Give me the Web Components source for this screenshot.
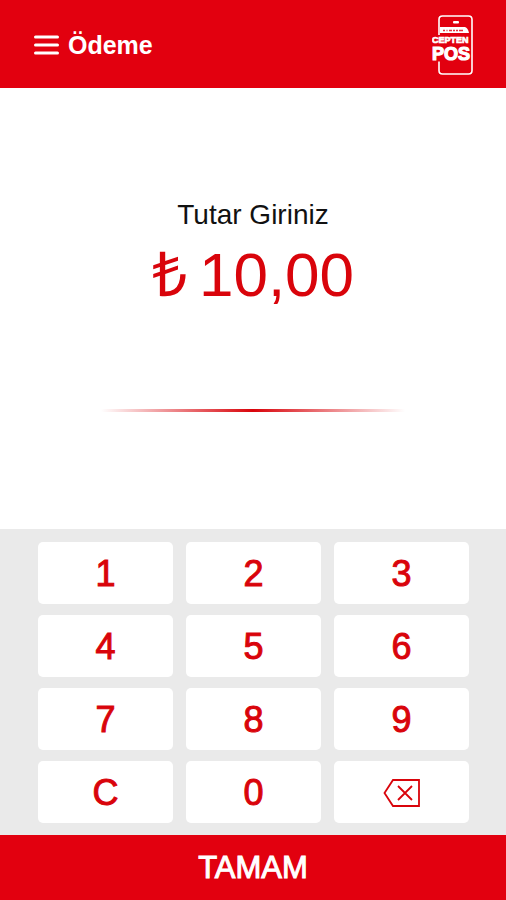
<!DOCTYPE html>
<html lang="tr">
<head>
<meta charset="utf-8">
<meta name="viewport" content="width=device-width, initial-scale=1">
<title>Ödeme</title>
<style>
  body {
    margin: 0;
    font-family: "Liberation Sans", Arial, sans-serif;
    --red: #e2000f;
    --ink: #d9040b;
  }
</style>
</head>
<body>
<pos-app>
  <pos-header slot="header" title="Ödeme"></pos-header>
  <pos-amount label="Tutar Giriniz" currency="₺">10,00</pos-amount>
  <pos-keypad slot="keypad"></pos-keypad>
  <pos-confirm slot="footer">TAMAM</pos-confirm>
</pos-app>

<script>
class PosApp extends HTMLElement {
  constructor() {
    super();
    this.root = this.attachShadow({ mode: "open" });
    this.root.innerHTML = `
      <style>
        :host {
          display: flex;
          flex-direction: column;
          min-height: 100vh;
          background: white;
        }
        main {
          flex: 1;
          display: flex;
          flex-direction: column;
        }
      </style>
      <slot name="header"></slot>
      <main><slot></slot></main>
      <slot name="keypad"></slot>
      <slot name="footer"></slot>
    `;
  }
}
customElements.define("pos-app", PosApp);

class PosLogo extends HTMLElement {
  constructor() {
    super();
    this.root = this.attachShadow({ mode: "open" });
    this.root.innerHTML = `
      <style>
        :host { display: block; }
        svg { display: block; }
        text {
          font-family: "Liberation Sans", Arial, sans-serif;
          font-weight: 700;
          fill: white;
          stroke: white;
        }
      </style>
      <svg width="42" height="62" viewBox="0 0 42 62" role="img" aria-label="Cepten POS">
        <path d="M7 21V5.500q0-3.500 3.500-3.500h26q3.500 0 3.500 3.500v51q0 3.500-3.500 3.500h-26q-3.500 0-3.500-3.500v-9" fill="none" stroke="white" stroke-width="1.600"/>
        <rect x="21" y="7" width="6" height="2.500" rx="1" fill="white"/>
        <path d="M8 13h25q3 1 4 6H8z" fill="white"/>
        <path d="M11 16.500h2M14.500 16.500h1M17 16.500h3M21 16.500h2M24 16.500h2M27 16.500h4" stroke="#e2000f" stroke-width="1.500" opacity=".8"/>
        <text x="0" y="29" font-size="9" stroke-width=".7">CEPTEN</text>
        <text x="0" y="46" font-size="18" stroke-width="1.200">POS</text>
      </svg>
    `;
  }
}
customElements.define("pos-logo", PosLogo);

class PosHeader extends HTMLElement {
  constructor() {
    super();
    this.root = this.attachShadow({ mode: "open" });
    this.root.innerHTML = this.html();
    this.root.querySelector("h1").innerText = this.getAttribute("title") || "";
  }

  html() {
    return `
      <style>
        :host {
          display: block;
          background: var(--red);
          color: white;
        }
        header {
          display: flex;
          align-items: center;
          gap: 9px;
          box-sizing: border-box;
          height: 88px;
          padding: 2px 32px 0 34px;
        }
        button {
          padding: 0;
          border: 0;
          background: none;
          color: inherit;
          cursor: pointer;
        }
        svg { display: block; }
        h1 {
          flex: 1;
          margin: 0;
          font-size: 25px;
          line-height: 32px;
        }
      </style>
      <header>
        <button type="button" aria-label="Menü">
          <svg width="25" height="20" viewBox="0 0 25 20" fill="none" stroke="currentColor" stroke-width="3" stroke-linecap="round">
            <path d="M1.500 2h22M1.500 10h22M1.500 18h22"/>
          </svg>
        </button>
        <h1></h1>
        <pos-logo></pos-logo>
      </header>
    `;
  }
}
customElements.define("pos-header", PosHeader);

class PosAmount extends HTMLElement {
  constructor() {
    super();
    this.root = this.attachShadow({ mode: "open" });
    this.root.innerHTML = this.html();
    this.root.querySelector(".label").innerText = this.getAttribute("label") || "";
    this.root.querySelector(".currency").innerText = this.getAttribute("currency") || "₺";
  }

  html() {
    return `
      <style>
        :host {
          flex: 1;
          display: flex;
          flex-direction: column;
          align-items: center;
          padding: 111px 16px;
          text-align: center;
        }
        p { margin: 0; }
        .label {
          color: #111;
          font-size: 28px;
          line-height: 32px;
        }
        .amount {
          display: flex;
          gap: 12px;
          margin-top: 8px;
          color: var(--ink);
          font-size: 62px;
          line-height: 72px;
        }
        .rule {
          width: 64%;
          height: 3px;
          margin-top: 98px;
          background: linear-gradient(to right, transparent, var(--ink) 50%, transparent);
        }
      </style>
      <p class="label"></p>
      <p class="amount"><span class="currency"></span><span><slot></slot></span></p>
      <div class="rule"></div>
    `;
  }
}
customElements.define("pos-amount", PosAmount);

class PosKey extends HTMLElement {
  constructor() {
    super();
    this.root = this.attachShadow({ mode: "open" });
    const label = this.getAttribute("label");
    this.root.innerHTML = `
      <style>
        :host { display: block; }
        button {
          display: flex;
          align-items: center;
          justify-content: center;
          width: 100%;
          height: 62px;
          padding: 2px 0 0;
          border: 0;
          border-radius: 5px;
          background: white;
          color: var(--ink);
          font: inherit;
          font-size: 36px;
          -webkit-text-stroke: 1px var(--ink);
          cursor: pointer;
        }
      </style>
      <button type="button" ${label ? `aria-label="${label}"` : ""}><slot></slot></button>
    `;
  }
}
customElements.define("pos-key", PosKey);

class PosKeypad extends HTMLElement {
  constructor() {
    super();
    this.root = this.attachShadow({ mode: "open" });
    this.root.innerHTML = this.html();
  }

  html() {
    const keys = ["1", "2", "3", "4", "5", "6", "7", "8", "9", "C", "0"];
    return `
      <style>
        :host {
          display: grid;
          grid-template-columns: repeat(3, 1fr);
          gap: 11px 13px;
          padding: 13px 37px 12px 38px;
          background: #eaeaea;
        }
        svg { display: block; }
      </style>
      ${keys.map(k => `<pos-key>${k}</pos-key>`).join("")}
      <pos-key label="Sil">
        <svg width="37" height="28" viewBox="0 0 37 28" fill="none" stroke="currentColor" stroke-width="1.800">
          <path d="M10 1h26v26H10L1.500 14z"/>
          <path d="M15 7l14 14M29 7l-14 14"/>
        </svg>
      </pos-key>
    `;
  }
}
customElements.define("pos-keypad", PosKeypad);

class PosConfirm extends HTMLElement {
  constructor() {
    super();
    this.root = this.attachShadow({ mode: "open" });
    this.root.innerHTML = `
      <style>
        :host { display: block; }
        button {
          display: block;
          width: 100%;
          height: 65px;
          padding: 0;
          border: 0;
          background: var(--red);
          color: white;
          font: inherit;
          font-size: 31px;
          -webkit-text-stroke: 1px white;
          cursor: pointer;
        }
      </style>
      <button type="button"><slot></slot></button>
    `;
  }
}
customElements.define("pos-confirm", PosConfirm);
</script>
</body>
</html>
